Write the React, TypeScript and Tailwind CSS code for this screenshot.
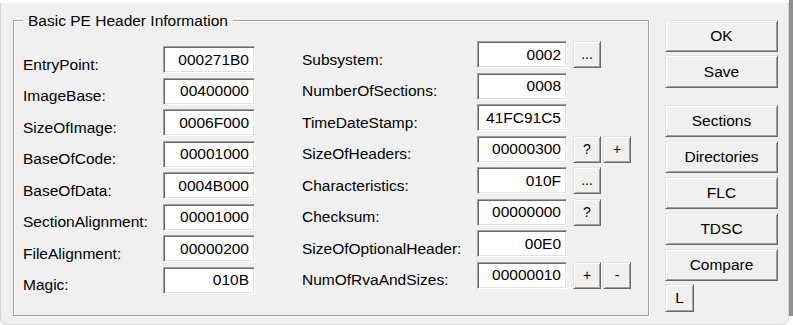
const font = { fontFamily: '"Liberation Sans", Arial, sans-serif' };

const edit =
  "h-[27px] bg-white border border-t-[#a0a0a0] border-l-[#a0a0a0] border-r-white border-b-white shadow-[inset_1px_1px_0_#696969,inset_-1px_-1px_0_#e3e3e3] flex items-center justify-end pr-[5px]";

const btn =
  "bg-[#f0f0f0] border border-t-[#e3e3e3] border-l-[#e3e3e3] border-r-[#696969] border-b-[#696969] shadow-[inset_1px_1px_0_#ffffff,inset_-1px_-1px_0_#a0a0a0] flex items-center justify-center";

interface Field {
  label: string;
  value: string;
  extras?: string[];
}

const left: Field[] = [
  { label: "EntryPoint:", value: "000271B0" },
  { label: "ImageBase:", value: "00400000" },
  { label: "SizeOfImage:", value: "0006F000" },
  { label: "BaseOfCode:", value: "00001000" },
  { label: "BaseOfData:", value: "0004B000" },
  { label: "SectionAlignment:", value: "00001000" },
  { label: "FileAlignment:", value: "00000200" },
  { label: "Magic:", value: "010B" },
];

const right: Field[] = [
  { label: "Subsystem:", value: "0002", extras: ["..."] },
  { label: "NumberOfSections:", value: "0008" },
  { label: "TimeDateStamp:", value: "41FC91C5" },
  { label: "SizeOfHeaders:", value: "00000300", extras: ["?", "+"] },
  { label: "Characteristics:", value: "010F", extras: ["..."] },
  { label: "Checksum:", value: "00000000", extras: ["?"] },
  { label: "SizeOfOptionalHeader:", value: "00E0" },
  { label: "NumOfRvaAndSizes:", value: "00000010", extras: ["+", "-"] },
];

function Row({ f, labelW, boxW }: { f: Field; labelW: string; boxW: string }) {
  return (
    <div className="flex items-center h-[27px]">
      <div className={`${labelW} pt-[10px]`}>{f.label}</div>
      <div className={`${edit} ${boxW}`}>{f.value}</div>
      {f.extras && (
        <div className="flex gap-[2px] ml-[6px]">
          {f.extras.map((x, i) => (
            <div key={i} className={`${btn} w-[28px] h-[27px] text-[14px]`}>
              {x}
            </div>
          ))}
        </div>
      )}
    </div>
  );
}

export default function App() {
  const sideButtons = ["Sections", "Directories", "FLC", "TDSC", "Compare"];
  return (
    <div className="w-[793px] h-[325px] bg-white flex text-[15.5px] text-black" style={font}>
      <div className="w-[789px] h-[322px] mt-[3px] bg-[#f0f0f0] rounded-b-[7px] border-x border-b border-[#d4d4d4] flex pl-[12px]">
        <fieldset className="w-[636px] h-[305px] mt-[8px] border border-[#a0a0a0] shadow-[inset_1px_1px_0_#ffffff,1px_1px_0_#ffffff] pl-[9px] flex gap-[47px]">
          <legend className="ml-0 px-[5px] leading-[19px]">Basic PE Header Information</legend>
          <div className="flex flex-col gap-y-[4.5px] pt-[16px]">
            {left.map((f) => (
              <Row key={f.label} f={f} labelW="w-[140px]" boxW="w-[92px]" />
            ))}
          </div>
          <div className="flex flex-col gap-y-[4.5px] pt-[11px]">
            {right.map((f) => (
              <Row key={f.label} f={f} labelW="w-[175px]" boxW="w-[90px]" />
            ))}
          </div>
        </fieldset>
        <div className="ml-[16px] mt-[17px] w-[113px] flex flex-col">
          <div className={`${btn} h-[32px]`}>OK</div>
          <div className={`${btn} h-[33px] mt-[3px]`}>Save</div>
          <div className="flex flex-col gap-[4px] mt-[17px]">
            {sideButtons.map((b) => (
              <div key={b} className={`${btn} h-[32px]`}>
                {b}
              </div>
            ))}
          </div>
          <div className={`${btn} w-[29px] h-[28px] mt-[3px]`}>L</div>
        </div>
      </div>
      <div className="w-[4px] h-[316px] bg-[#8f8f8f]" />
    </div>
  );
}
